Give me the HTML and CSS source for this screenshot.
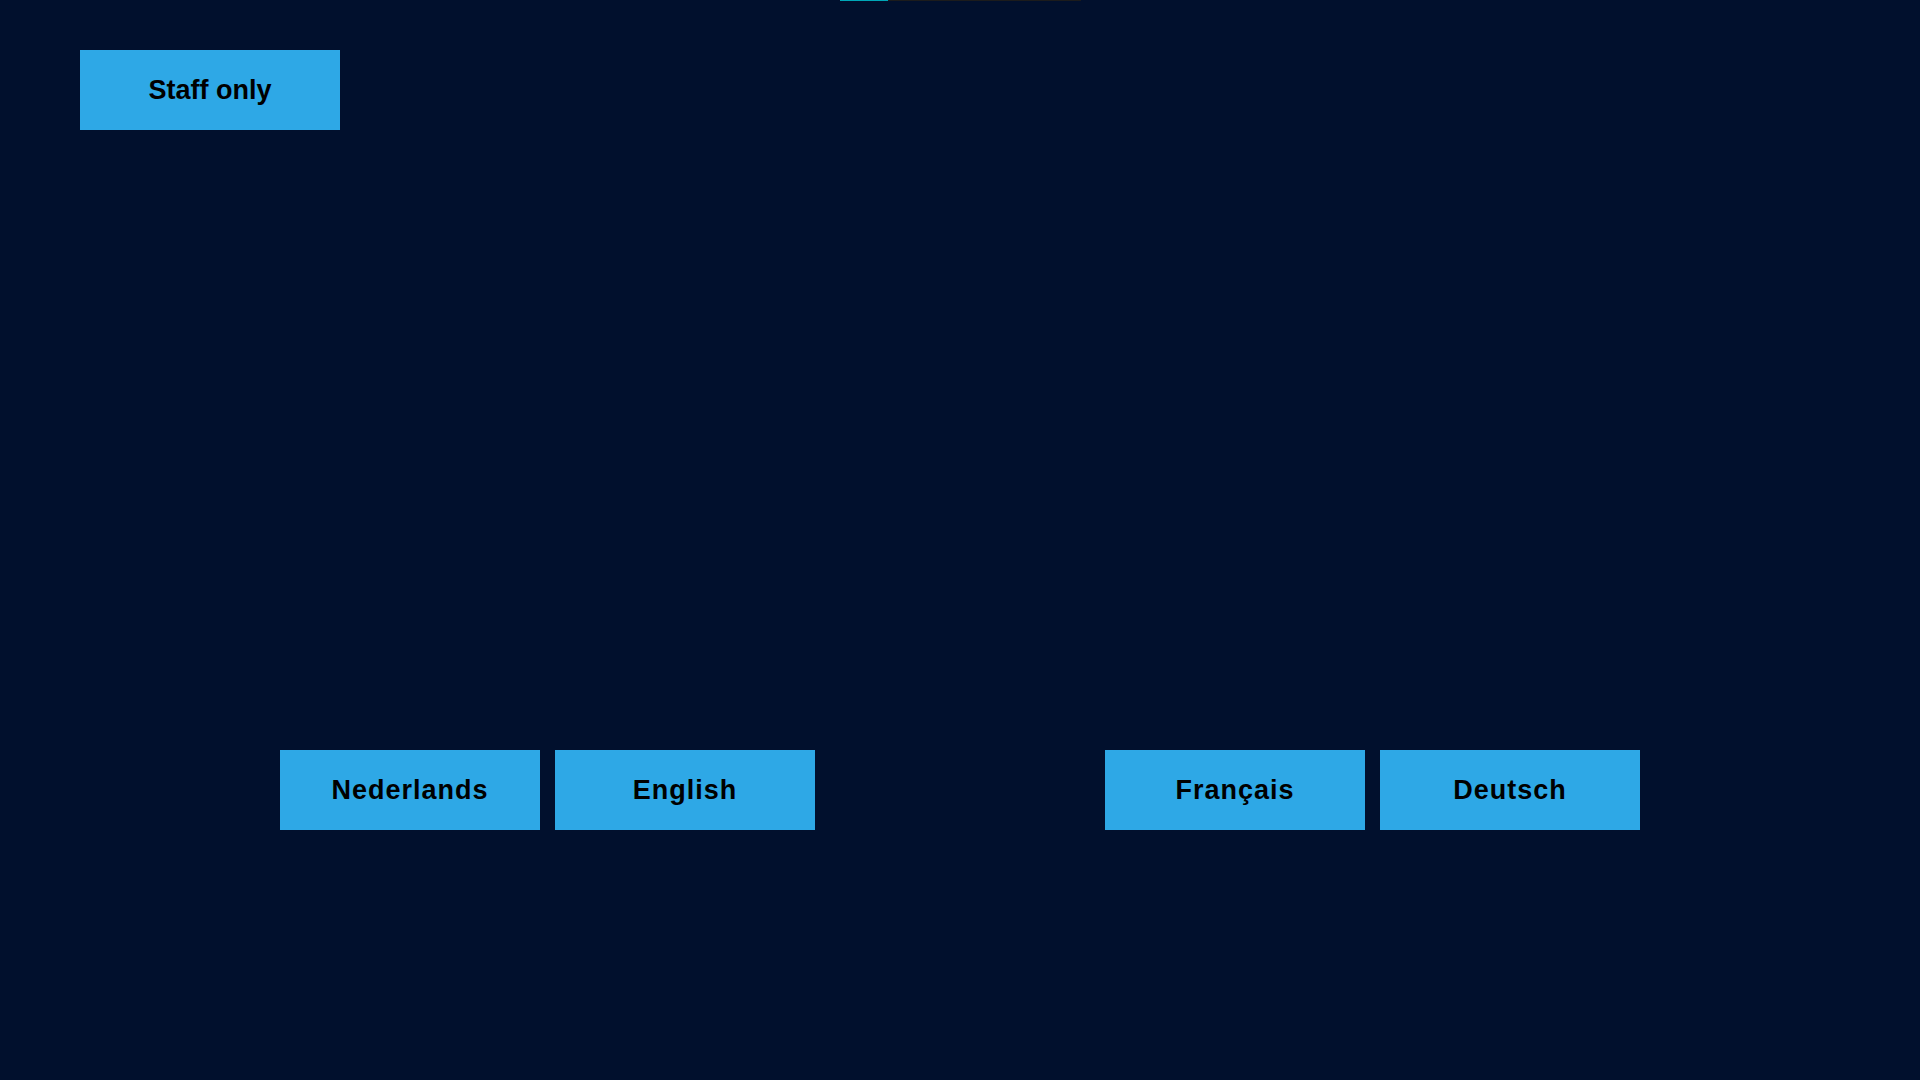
FILE: index.html
```html
<!DOCTYPE html>
<html lang="en">
<head>
<meta charset="utf-8">
<title>Language select</title>
<link rel="stylesheet" href="styles.css">
</head>
<body>
<div class="progress">
  <div class="progress-fill"></div>
  <div class="progress-rest"></div>
</div>
<header class="top">
  <button class="btn btn-staff">Staff only</button>
</header>
<main class="languages">
  <div class="lang-group">
    <button class="btn btn-lang">Nederlands</button>
    <button class="btn btn-lang">English</button>
  </div>
  <div class="lang-group">
    <button class="btn btn-lang">Français</button>
    <button class="btn btn-lang">Deutsch</button>
  </div>
</main>
</body>
</html>
```
FILE: styles.css
```css
html, body {
  margin: 0;
  padding: 0;
  height: 100%;
}
body {
  background: #01102d;
  font-family: "Liberation Sans", Arial, sans-serif;
  overflow: hidden;
}
.progress {
  display: flex;
  height: 1px;
  margin-left: 840px;
}
.progress-fill {
  width: 48px;
  background: #00a7b8;
}
.progress-rest {
  width: 193px;
  background: #1c1c1c;
}
.top {
  padding: 49px 0 0 80px;
}
.btn {
  display: flex;
  align-items: center;
  justify-content: center;
  width: 260px;
  height: 80px;
  padding: 0;
  border: none;
  border-radius: 0;
  background: #2ea8e6;
  color: #000;
  font-family: "Liberation Sans", Arial, sans-serif;
  font-weight: bold;
  font-size: 27px;
  cursor: pointer;
}
.btn-staff {
  letter-spacing: 0;
}
.btn-lang {
  letter-spacing: 1px;
}
.languages {
  display: flex;
  justify-content: space-between;
  margin-top: 620px;
  padding: 0 280px;
}
.lang-group {
  display: flex;
  gap: 15px;
}
```
